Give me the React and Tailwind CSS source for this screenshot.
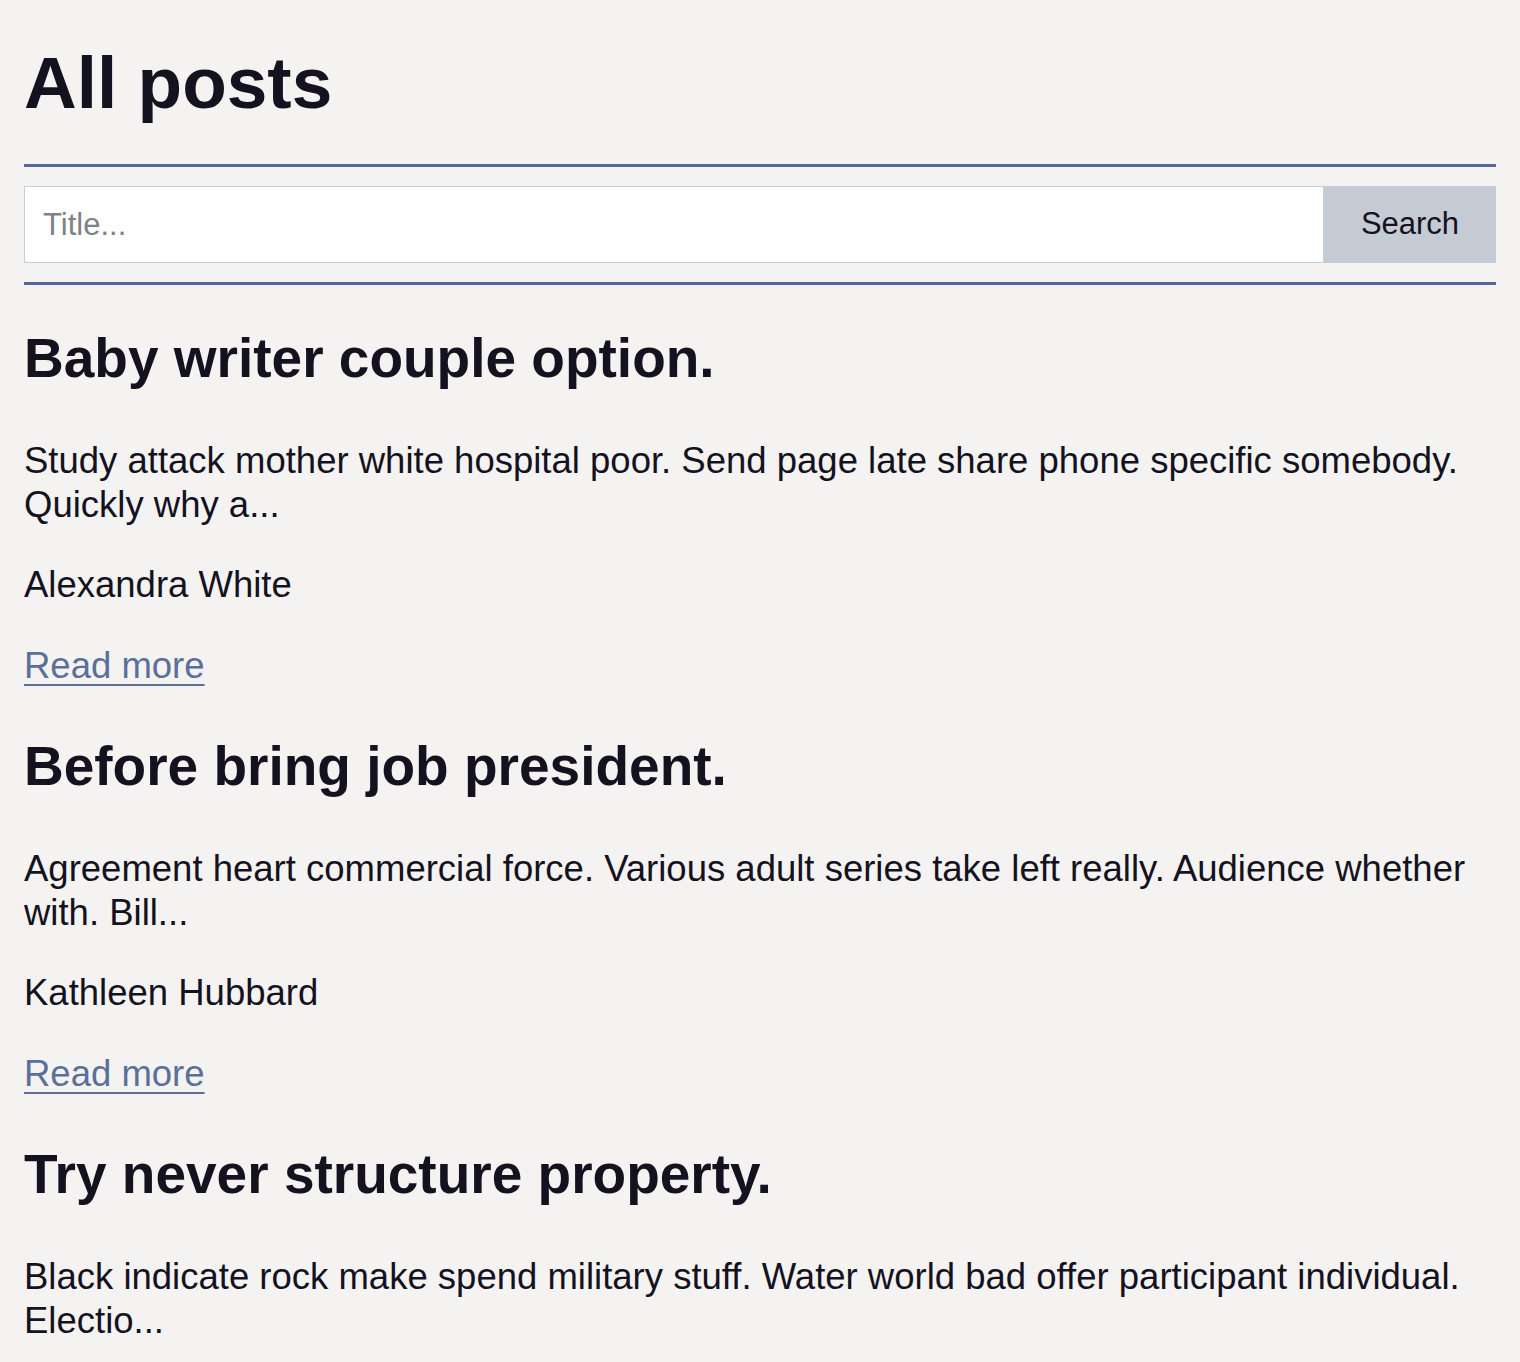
export default function App() {
  const posts = [
    {
      title: "Baby writer couple option.",
      body: "Study attack mother white hospital poor. Send page late share phone specific somebody. Quickly why a...",
      author: "Alexandra White",
    },
    {
      title: "Before bring job president.",
      body: "Agreement heart commercial force. Various adult series take left really. Audience whether with. Bill...",
      author: "Kathleen Hubbard",
    },
    {
      title: "Try never structure property.",
      body: "Black indicate rock make spend military stuff. Water world bad offer participant individual. Electio...",
      author: "Unknown",
    },
  ];
  return (
    <div
      className="min-h-screen bg-[#f4f3f1] px-6 text-[#15121f]"
      style={{ fontFamily: '"Liberation Sans", Arial, Helvetica, sans-serif' }}
    >
      <h1 className="pt-[43px] text-[73px] font-bold leading-[80px]">All posts</h1>
      <form className="mt-[41px] flex border-y-[3px] border-[#56669a] py-[19px]">
        <input
          type="text"
          placeholder="Title..."
          className="h-[77px] flex-1 border border-[#c5ced8] bg-white px-[18px] text-[31px] text-[#15121f] outline-none placeholder:text-[#7d818a]"
        />
        <button
          type="button"
          className="h-[77px] w-[172px] bg-[#c5cbd4] text-[31px] text-[#15121f]"
        >
          Search
        </button>
      </form>
      <div className="pt-[41px]">
        {posts.map((p, i) => (
          <article key={i} className="pb-[46px]">
            <h2 className="text-[55px] font-bold leading-[64px]">{p.title}</h2>
            <p className="mt-[49px] text-[36.5px] leading-[44px]">{p.body}</p>
            <p className="mt-[36px] text-[36.5px] leading-[44px]">{p.author}</p>
            <a
              href="#"
              className="mt-[37px] inline-block text-[36.5px] leading-[44px] text-[#5a6f9a] underline decoration-[2px] underline-offset-[6px]"
            >
              Read more
            </a>
          </article>
        ))}
      </div>
    </div>
  );
}
